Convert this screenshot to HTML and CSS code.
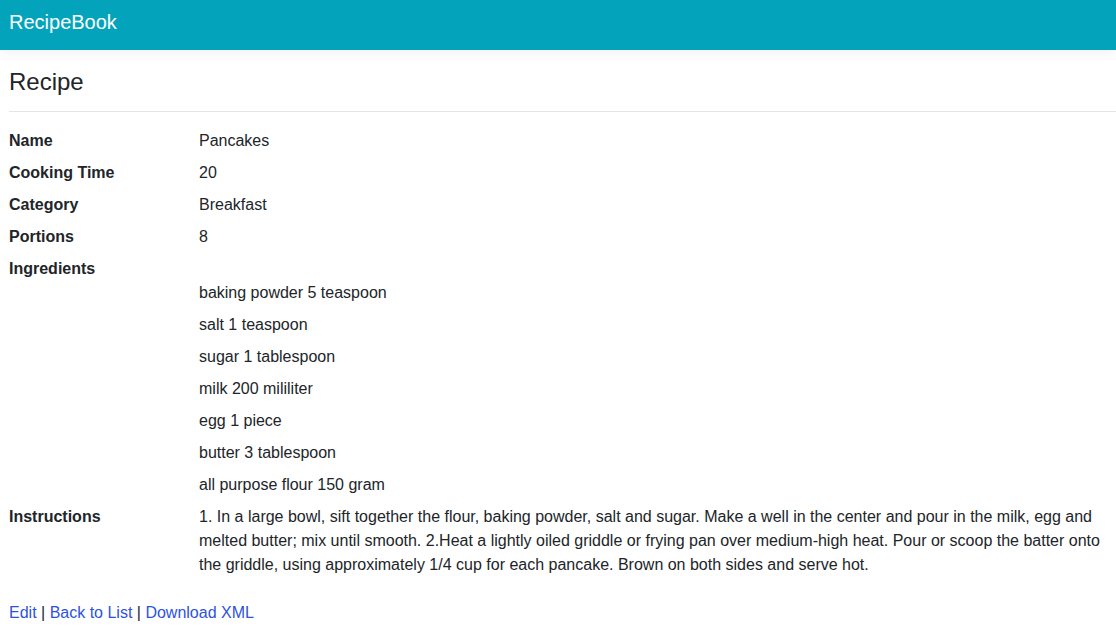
FILE: index.html
```html
<!DOCTYPE html>
<html lang="en">
<head>
<meta charset="utf-8">
<title>RecipeBook</title>
<link rel="stylesheet" href="styles.css">
</head>
<body>
<header class="navbar">
  <a class="brand" href="#">RecipeBook</a>
</header>
<main class="content">
  <h4 class="title">Recipe</h4>
  <hr class="rule">
  <dl class="details">
    <div class="row"><dt>Name</dt><dd>Pancakes</dd></div>
    <div class="row"><dt>Cooking Time</dt><dd>20</dd></div>
    <div class="row"><dt>Category</dt><dd>Breakfast</dd></div>
    <div class="row"><dt>Portions</dt><dd>8</dd></div>
    <div class="row row-tight"><dt>Ingredients</dt><dd></dd></div>
    <div class="row"><dt></dt>
      <dd>
        <ul class="ingredients">
          <li>baking powder 5 teaspoon</li>
          <li>salt 1 teaspoon</li>
          <li>sugar 1 tablespoon</li>
          <li>milk 200 mililiter</li>
          <li>egg 1 piece</li>
          <li>butter 3 tablespoon</li>
          <li>all purpose flour 150 gram</li>
        </ul>
      </dd>
    </div>
    <div class="row"><dt>Instructions</dt><dd>1. In a large bowl, sift together the flour, baking powder, salt and sugar. Make a well in the center and pour in the milk, egg and melted butter; mix until smooth. 2.Heat a lightly oiled griddle or frying pan over medium-high heat. Pour or scoop the batter onto the griddle, using approximately 1/4 cup for each pancake. Brown on both sides and serve hot.</dd></div>
  </dl>
  <div class="actions">
    <a href="#">Edit</a> | <a href="#">Back to List</a> | <a href="#">Download XML</a>
  </div>
</main>
</body>
</html>
```
FILE: styles.css
```css
html, body {
  margin: 0;
  padding: 0;
}
body {
  font-family: "Liberation Sans", Arial, sans-serif;
  font-size: 16px;
  line-height: 24px;
  color: #212529;
  background: #fff;
  overflow: hidden;
}
.navbar {
  height: 50px;
  background: #03a4bb;
  padding: 7px 9px 0;
  box-sizing: border-box;
  box-shadow: 0 4px 12px rgba(0, 0, 0, 0.05);
  position: relative;
}
.brand {
  display: block;
  font-size: 20px;
  line-height: 30px;
  color: #fff;
  text-decoration: none;
}
.content {
  padding: 17px 0 0 9px;
}
.title {
  margin: 0;
  font-size: 24px;
  line-height: 29px;
  font-weight: 400;
}
.rule {
  margin: 15px 0 17px;
  border: 0;
  border-top: 1px solid rgba(0, 0, 0, 0.1);
  height: 0;
}
.details {
  margin: 0 0 16px;
}
.row {
  display: flex;
}
.row dt {
  width: 190px;
  flex: none;
  font-weight: 700;
}
.row dd {
  margin: 0 0 8px;
  width: 917px;
}
.row-tight dd {
  margin-bottom: 0;
}
.ingredients {
  list-style: none;
  margin: 0;
  padding: 0;
}
.ingredients li + li {
  margin-top: 8px;
}
.actions a {
  color: #2d52e0;
  text-decoration: none;
}
```
